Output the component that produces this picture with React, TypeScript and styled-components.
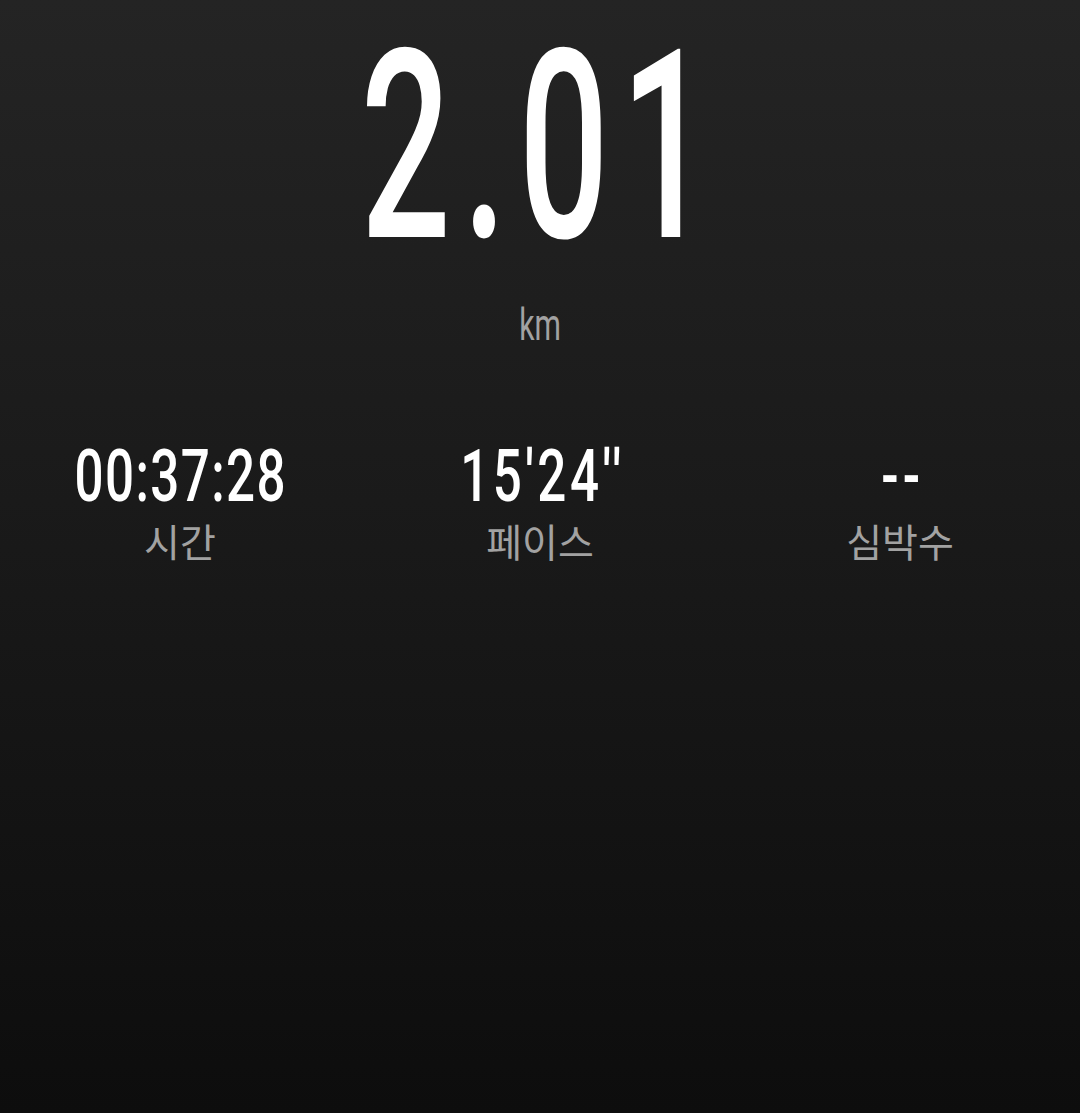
import React from "react";
import styled, { createGlobalStyle } from "styled-components";

const Global = createGlobalStyle`
  html, body {
    margin: 0;
    padding: 0;
    background: #0d0d0d;
  }
  #root {
    min-height: 100vh;
  }
`;

const Page = styled.main`
  min-height: 1113px;
  width: 100%;
  box-sizing: border-box;
  background: linear-gradient(180deg, #242424 0%, #1a1a1a 45%, #0d0d0d 100%);
  display: flex;
  flex-direction: column;
  align-items: center;
  padding-top: 15px;
  font-family: Roboto, "Noto Sans CJK KR", sans-serif;
  overflow: hidden;
`;

const Condensed = styled.span<{ $scale: number }>`
  display: inline-block;
  transform: scaleX(${(p) => p.$scale});
  transform-origin: center;
  white-space: nowrap;
`;

const BigValue = styled.div`
  font-size: 264px;
  line-height: 1;
  font-weight: 500;
  color: #ffffff;
  letter-spacing: 20px;
  text-align: center;
  padding-left: 4px;
`;

const Unit = styled.div`
  margin-top: 23px;
  font-size: 45px;
  line-height: 1;
  color: #a2a2a2;
  text-align: center;
`;

const StatsRow = styled.section`
  width: 100%;
  margin-top: 93px;
  display: grid;
  grid-template-columns: repeat(3, 1fr);
`;

const Stat = styled.div`
  display: flex;
  flex-direction: column;
  align-items: center;
`;

const StatValue = styled.div<{ $tracking: number }>`
  font-size: 73px;
  line-height: 1;
  font-weight: 500;
  color: #ffffff;
  letter-spacing: ${(p) => p.$tracking}px;
  padding-left: ${(p) => p.$tracking}px;
`;

const StatLabel = styled.div`
  margin-top: 8px;
  font-family: "Noto Sans CJK KR", sans-serif;
  font-size: 39px;
  line-height: 1;
  color: #a2a2a2;
`;

const stats = [
  { value: "00:37:28", label: "시간", tracking: 2 },
  { value: "15'24''", label: "페이스", tracking: 5 },
  { value: "--", label: "심박수", tracking: 6 },
];

export default function App() {
  return (
    <>
      <Global />
      <Page>
        <BigValue>
          <Condensed $scale={0.6}>2.01</Condensed>
        </BigValue>
        <Unit>
          <Condensed $scale={0.67}>km</Condensed>
        </Unit>
        <StatsRow>
          {stats.map((s) => (
            <Stat key={s.label}>
              <StatValue $tracking={s.tracking}>
                <Condensed $scale={0.7}>{s.value}</Condensed>
              </StatValue>
              <StatLabel>{s.label}</StatLabel>
            </Stat>
          ))}
        </StatsRow>
      </Page>
    </>
  );
}
